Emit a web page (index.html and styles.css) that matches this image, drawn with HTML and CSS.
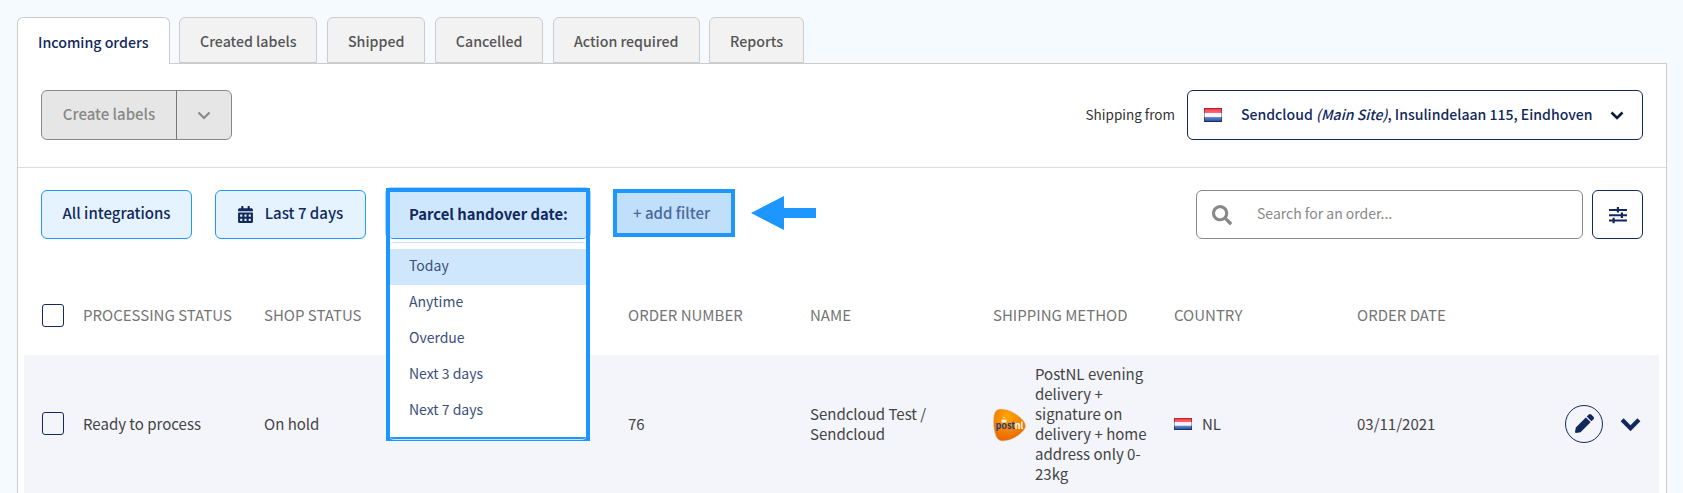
FILE: index.html
```html
<!DOCTYPE html>
<html lang="en">
<head>
<meta charset="utf-8">
<title>Incoming orders</title>
<link rel="stylesheet" href="styles.css">
</head>
<body>
<nav class="tabs">
  <a class="tab tab-active">Incoming orders</a>
  <a class="tab">Created labels</a>
  <a class="tab">Shipped</a>
  <a class="tab">Cancelled</a>
  <a class="tab">Action required</a>
  <a class="tab">Reports</a>
</nav>
<main class="panel">
  <section class="toolbar">
    <div class="split-btn">
      <span class="split-main">Create labels</span>
      <span class="split-arrow">
        <svg class="chev-sm" viewBox="0 0 14 9"><path d="M1.5 1.5 7 7l5.5-5.5" fill="none" stroke="currentColor" stroke-width="2.2"/></svg>
      </span>
    </div>
    <div class="shipping">
      <span class="shipping-label">Shipping from</span>
      <div class="select">
        <svg class="flag flag-select" viewBox="0 0 18 14" preserveAspectRatio="none"><use href="#nl"/></svg>
        <span class="select-text">Sendcloud <em>(Main Site)</em>, Insulindelaan 115, Eindhoven</span>
        <svg class="select-chev" viewBox="0 0 14 9"><path d="M1.5 1.5 7 7l5.5-5.5" fill="none" stroke="currentColor" stroke-width="2.6"/></svg>
      </div>
    </div>
  </section>
  <section class="filters">
    <button class="filter filter-int"><span class="lift">All integrations</span></button>
    <button class="filter filter-date">
      <svg class="cal" viewBox="0 0 448 512"><path fill="currentColor" d="M0 464c0 26.5 21.5 48 48 48h352c26.5 0 48-21.5 48-48V192H0v272zm320-196c0-6.6 5.4-12 12-12h40c6.6 0 12 5.4 12 12v40c0 6.6-5.4 12-12 12h-40c-6.6 0-12-5.4-12-12v-40zm0 128c0-6.6 5.4-12 12-12h40c6.6 0 12 5.4 12 12v40c0 6.6-5.4 12-12 12h-40c-6.6 0-12-5.4-12-12v-40zM192 268c0-6.6 5.4-12 12-12h40c6.6 0 12 5.4 12 12v40c0 6.6-5.4 12-12 12h-40c-6.6 0-12-5.4-12-12v-40zm0 128c0-6.6 5.4-12 12-12h40c6.6 0 12 5.4 12 12v40c0 6.6-5.4 12-12 12h-40c-6.6 0-12-5.4-12-12v-40zM64 268c0-6.6 5.4-12 12-12h40c6.6 0 12 5.4 12 12v40c0 6.6-5.4 12-12 12H76c-6.6 0-12-5.4-12-12v-40zm0 128c0-6.6 5.4-12 12-12h40c6.6 0 12 5.4 12 12v40c0 6.6-5.4 12-12 12H76c-6.6 0-12-5.4-12-12v-40zM400 64h-48V16c0-8.8-7.2-16-16-16h-32c-8.8 0-16 7.2-16 16v48H160V16c0-8.8-7.2-16-16-16h-32c-8.8 0-16 7.2-16 16v48H48C21.5 64 0 85.5 0 112v48h448v-48c0-26.5-21.5-48-48-48z"/></svg>
      <span class="lift">Last 7 days</span>
    </button>
    <div class="handover">
      <div class="handover-frame">
        <div class="handover-head">Parcel handover date:</div>
        <ul class="menu">
          <li class="menu-item menu-item-active">Today</li>
          <li class="menu-item">Anytime</li>
          <li class="menu-item">Overdue</li>
          <li class="menu-item">Next 3 days</li>
          <li class="menu-item">Next 7 days</li>
        </ul>
      </div>
    </div>
    <button class="add-filter"><span class="lift">+ add filter</span></button>
    <svg class="arrow" viewBox="0 0 65 34"><path fill="#1e96ff" d="M0 17 33 0v12h32v10H33v12z"/></svg>
    <div class="search">
      <svg class="search-icon" viewBox="0 0 512 512"><path fill="currentColor" d="M505 442.7L405.3 343c-4.5-4.5-10.6-7-17-7H372c27.6-35.3 44-79.7 44-128C416 93.1 322.9 0 208 0S0 93.1 0 208s93.1 208 208 208c48.3 0 92.7-16.4 128-44v16.3c0 6.4 2.5 12.5 7 17l99.7 99.7c9.4 9.4 24.6 9.4 33.9 0l28.3-28.3c9.4-9.4 9.4-24.6.1-34zM208 336c-70.7 0-128-57.2-128-128 0-70.7 57.2-128 128-128 70.7 0 128 57.2 128 128 0 70.7-57.2 128-128 128z"/></svg>
      <span class="search-ph">Search for an order...</span>
    </div>
    <button class="columns-btn">
      <svg class="sliders" viewBox="0 0 18 18"><path fill="currentColor" d="M0 3h18v1.900H0zM0 8.300h18v1.900H0zM0 13.600h18v1.900H0zM7.800 1h2.200v5.500H7.800zM11.800 6.500H14V12h-2.200zM3.500 11.800h2.200v5.500H3.500z"/></svg>
    </button>
  </section>
  <section class="table">
    <div class="row row-head">
      <span class="check"></span>
      <span>PROCESSING STATUS</span>
      <span>SHOP STATUS</span>
      <span></span>
      <span>ORDER NUMBER</span>
      <span>NAME</span>
      <span>SHIPPING METHOD</span>
      <span>COUNTRY</span>
      <span>ORDER DATE</span>
      <span></span>
    </div>
    <div class="row row-body">
      <span class="check"></span>
      <span>Ready to process</span>
      <span>On hold</span>
      <span></span>
      <span>76</span>
      <span>Sendcloud Test / Sendcloud</span>
      <div class="method">
        <svg class="postnl" viewBox="0 0 34 34">
          <defs>
            <radialGradient id="pn" cx="0.45" cy="0.25" r="0.85"><stop offset="0" stop-color="#ffa600"/><stop offset="1" stop-color="#e85f00"/></radialGradient>
          </defs>
          <path fill="url(#pn)" stroke="#d8d8d8" stroke-width=".6" d="M9 1C18 1 27 7 32 13.500c2 3 2 6 0 8.500-5 6-13 11-21 11-4 0-6-2-7.500-6C1 20 1 13 2 7 3 3 5 1 9 1z"/>
          <path fill="#fff" opacity=".85" d="M9.500 11.500h5v3h-5zM10.500 10l1.500-1.200 1.500 1.200z"/>
          <text x="3.500" y="21" class="pn-post">post</text><text x="22.800" y="21" class="pn-nl">nl</text>
        </svg>
        <span class="method-text">PostNL evening delivery + signature on delivery + home address only 0-23kg</span>
      </div>
      <div class="country">
        <svg class="flag" viewBox="0 0 18 14" preserveAspectRatio="none"><use href="#nl"/></svg>
        <span>NL</span>
      </div>
      <span>03/11/2021</span>
      <div class="actions">
        <span class="edit">
          <svg class="pencil" viewBox="0 0 512 512"><path fill="currentColor" d="M497.9 142.1l-46.1 46.1c-4.7 4.7-12.3 4.7-17 0l-111-111c-4.7-4.7-4.7-12.3 0-17l46.1-46.1c18.7-18.7 49.1-18.7 67.9 0l60.1 60.1c18.8 18.7 18.8 49.1 0 67.9zM284.2 99.8L21.6 362.4.4 483.9c-2.9 16.4 11.4 30.6 27.8 27.8l121.5-21.3 262.6-262.6c4.7-4.7 4.7-12.3 0-17l-111-111c-4.8-4.7-12.4-4.7-17.1 0z"/></svg>
        </span>
        <svg class="row-chev" viewBox="0 0 20 13"><path d="M2 2.500l8 8 8-8" fill="none" stroke="currentColor" stroke-width="4"/></svg>
      </div>
    </div>
  </section>
</main>
<svg class="defs" width="0" height="0">
  <defs>
    <linearGradient id="nl-r" x1="0" y1="0" x2="0" y2="1"><stop offset="0" stop-color="#f33"/><stop offset="1" stop-color="#f68"/></linearGradient>
    <linearGradient id="nl-b" x1="0" y1="0" x2="0" y2="1"><stop offset="0" stop-color="#6a90d8"/><stop offset="1" stop-color="#1c3f9a"/></linearGradient>
    <symbol id="nl" viewBox="0 0 18 14" preserveAspectRatio="none">
      <rect width="18" height="5" fill="url(#nl-r)"/>
      <rect y="5" width="18" height="4" fill="#f6f6f6"/>
      <rect y="9" width="18" height="5" fill="url(#nl-b)"/>
      <rect x=".5" y=".5" width="17" height="13" fill="none" stroke="#000" stroke-opacity=".35"/>
    </symbol>
  </defs>
</svg>
</body>
</html>
```
FILE: styles.css
```css
* { box-sizing: border-box; }
html, body { height: 493px; overflow: hidden; }
body {
  margin: 0;
  padding: 17px 17px 0;
  background: #f5faff;
  color: #12295d;
  font: 400 15px/20px "Noto Sans CJK SC", "Noto Sans", sans-serif;
}
ul { margin: 0; padding: 0; list-style: none; }
button { font: inherit; color: inherit; cursor: pointer; }
.lift { padding-bottom: 3px; }

.tabs { display: flex; gap: 9.5px; height: 47px; position: relative; z-index: 1; }
.tab {
  display: flex;
  align-items: center;
  justify-content: center;
  height: 46px;
  padding: 1px 20px 0;
  background: #f2f2f2;
  border: 1px solid #ccc;
  border-radius: 6px 6px 0 0;
  color: #555;
  font-size: 14.2px;
  font-weight: 500;
}
.tab-active {
  height: 47px;
  background: #fff;
  border-bottom: 0;
  color: #12295d;
}

.panel {
  width: 1650px;
  height: 440px;
  margin-top: -1px;
  background: #fff;
  border: 1px solid #ccc;
}

.toolbar {
  display: flex;
  justify-content: space-between;
  align-items: flex-start;
  height: 104px;
  padding: 26px 23px 0;
  border-bottom: 1px solid #ddd;
}
.split-btn {
  display: flex;
  width: 191px;
  height: 50px;
  background: #e6e6e6;
  border: 1px solid #888;
  border-radius: 6px;
  color: #888;
  font-weight: 500;
}
.split-main {
  display: flex;
  align-items: center;
  justify-content: center;
  width: 135px;
  padding-bottom: 3px;
  border-right: 1px solid #777;
}
.split-arrow { display: flex; flex: 1; align-items: center; justify-content: center; }
.chev-sm { width: 14px; height: 9px; }

.shipping { display: flex; align-items: center; gap: 12px; }
.shipping-label { padding-bottom: 2px; color: #333; font-size: 13.5px; }
.select {
  display: flex;
  align-items: center;
  width: 456px;
  height: 50px;
  padding: 0 18px 0 16px;
  border: 1px solid #12295d;
  border-radius: 6px;
}
.flag { display: block; width: 18px; height: 12px; flex: none; }
.flag-select { height: 14px; }
.select-text { margin-left: 19px; padding-bottom: 2px; font-size: 14.05px; font-weight: 500; white-space: nowrap; }
.select-chev { width: 14px; height: 9px; margin-left: auto; color: #0b1a3a; }

.filters {
  display: flex;
  align-items: flex-start;
  height: 71px;
  padding: 22px 23px 0;
}
.filter {
  display: flex;
  align-items: center;
  justify-content: center;
  height: 49px;
  background: #e5f3ff;
  border: 1px solid #2096ff;
  border-radius: 6px;
  font-weight: 500;
  white-space: nowrap;
}
.filter-int { width: 151px; margin-right: 23px; }
.filter-date { width: 151px; margin-right: 20px; gap: 12px; }
.cal { width: 15px; height: 17px; }

.handover { position: relative; width: 204px; height: 49px; margin-right: 23px; }
.handover::before {
  content: "";
  position: absolute;
  top: -3px;
  left: -1px;
  right: -1px;
  height: 52px;
  background: #a8d5ff;
  border-radius: 6px;
}
.handover-frame {
  position: absolute;
  top: -2px;
  left: 0;
  right: 0;
  z-index: 2;
  height: 253px;
  background: #fff;
  border: 4px solid #1e96ff;
}
.handover-head {
  display: flex;
  align-items: center;
  height: 47px;
  padding: 0 0 3px 19px;
  background: #cfe7fd;
  border-bottom: 1px solid #2096ff;
  border-radius: 0 0 3px 3px;
  font-size: 14.8px;
  font-weight: 700;
}
.menu {
  height: 198px;
  margin-top: 3px;
  padding-top: 6px;
  border: 1px solid #c4e2ff;
  border-width: 1px 0;
  border-radius: 4px;
}
.menu-item {
  display: flex;
  align-items: center;
  height: 36px;
  padding: 0 0 5px 19px;
  color: #3b4f7c;
  font-size: 14px;
}
.menu-item-active { background: #cfe7fd; }

.add-filter {
  width: 122px;
  height: 48px;
  margin: -1px 16px 0 0;
  padding: 0 0 0 16px;
  background: #c0dffa;
  border: 4px solid #1e96ff;
  color: #4a6a9c;
  font-weight: 500;
  text-align: left;
}
.arrow { width: 65px; height: 34px; margin-top: 6px; }

.search {
  display: flex;
  align-items: center;
  width: 387px;
  height: 49px;
  margin-left: auto;
  padding-left: 15px;
  border: 1px solid #888;
  border-radius: 6px;
  color: #888;
}
.search-icon { width: 20px; height: 20px; }
.search-ph { margin-left: 25px; padding-bottom: 3px; font-size: 14px; }
.columns-btn {
  display: flex;
  align-items: center;
  justify-content: center;
  width: 51px;
  height: 49px;
  margin-left: 9px;
  padding: 0;
  background: #fff;
  border: 1px solid #12295d;
  border-radius: 6px;
}
.sliders { width: 18px; height: 18px; }

.table { margin: 0 7px 0 6px; }
.row {
  display: grid;
  grid-template-columns: 18px 23px 18px 181px 182px 182px 182px 183px 181px 183px 183px 1fr;
  align-items: center;
}
.row > span, .row > div { min-width: 0; }
.row-head {
  height: 116px;
  padding-top: 36px;
  color: #757575;
}
.row-body {
  height: 140px;
  padding-bottom: 3px;
  background: #f3f5fa;
  color: #444;
}
.check {
  grid-column: 2;
  width: 22px;
  height: 23px;
  background: #fff;
  border: 1px solid #12295d;
  border-radius: 3px;
}
.row-body .check { background: transparent; }
.row > .check + span { grid-column: 4; }

.method { display: flex; align-items: center; }
.postnl { width: 34px; height: 34px; flex: none; margin: 2px 0 0 -1px; }
.pn-post { font: 700 9px "Noto Sans CJK SC", sans-serif; fill: #243c88; }
.pn-nl { font: 700 9px "Noto Sans CJK SC", sans-serif; fill: #fff; }
.method-text { flex: none; width: 116px; margin-left: 9px; }
.country { display: flex; align-items: center; gap: 10px; }

.actions { display: flex; align-items: center; padding-left: 25px; color: #12295d; }
.edit {
  display: flex;
  align-items: center;
  justify-content: center;
  flex: none;
  width: 38px;
  height: 38px;
  border: 1px solid #12295d;
  border-radius: 50%;
}
.pencil { width: 19px; height: 19px; }
.row-chev { width: 21px; height: 14px; margin-left: 17px; flex: none; }
.defs { position: absolute; }
```
